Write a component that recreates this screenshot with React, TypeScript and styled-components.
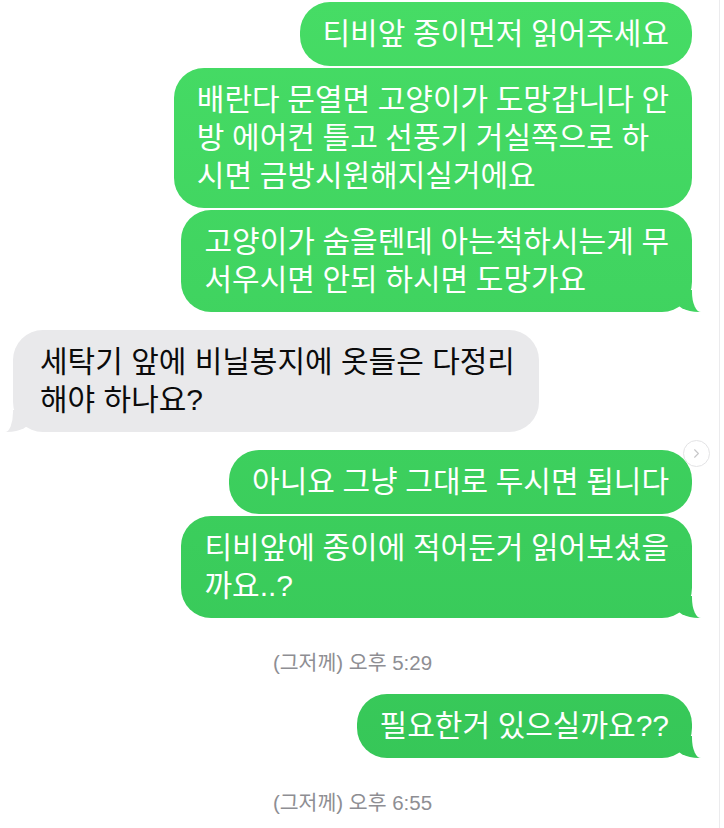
import React from 'react';
import styled, { createGlobalStyle, css } from 'styled-components';
import { ChevronRight } from 'lucide-react';

const GREEN = 'linear-gradient(180deg, #46dc65 0px, #35c557 828px) fixed';
const GRAY = '#e9e9eb';

const Global = createGlobalStyle`
  html, body { margin: 0; padding: 0; background: #fff; }
  body {
    font-family: "Liberation Sans", "Noto Sans CJK KR", sans-serif;
    -webkit-font-smoothing: antialiased;
  }
`;

const Page = styled.div`
  display: flex;
  width: 724px;
  height: 828px;
  overflow: hidden;
  background: #fff;
`;

const Thread = styled.main`
  box-sizing: border-box;
  width: 720px;
  height: 828px;
  border-right: 1px solid #ebebed;
  display: flex;
  flex-direction: column;
  padding-top: 2px;
`;

type Side = 'me' | 'them';

const Group = styled.section<{ $side: Side; $mt?: number }>`
  position: relative;
  display: flex;
  flex-direction: column;
  gap: 2px;
  align-items: ${(p) => (p.$side === 'me' ? 'flex-end' : 'flex-start')};
  padding: ${(p) => (p.$side === 'me' ? '0 27px 0 0' : '0 0 0 13px')};
  margin-top: ${(p) => p.$mt ?? 0}px;
`;

const tailRight = css`
  &::before {
    content: '';
    position: absolute;
    z-index: -1;
    bottom: 0;
    right: -9px;
    width: 26px;
    height: 22px;
    background: ${GREEN};
    border-bottom-left-radius: 24px 13px;
  }
  &::after {
    content: '';
    position: absolute;
    z-index: -1;
    bottom: 0;
    right: -20px;
    width: 20px;
    height: 24px;
    background: #fff;
    border-bottom-left-radius: 9px 20px;
  }
`;

const tailLeft = css`
  &::before {
    content: '';
    position: absolute;
    z-index: -1;
    bottom: 0;
    left: -8px;
    width: 26px;
    height: 22px;
    background: ${GRAY};
    border-bottom-right-radius: 24px 13px;
  }
  &::after {
    content: '';
    position: absolute;
    z-index: -1;
    bottom: 0;
    left: -20px;
    width: 20px;
    height: 24px;
    background: #fff;
    border-bottom-right-radius: 8px 20px;
  }
`;

const Bubble = styled.div<{ $side: Side; $tail?: boolean }>`
  position: relative;
  z-index: 0;
  border-radius: 30px;
  line-height: 38px;
  white-space: nowrap;
  ${(p) =>
    p.$side === 'me'
      ? css`
          background: ${GREEN};
          color: #fff;
          font-size: 30px;
          word-spacing: -0.7px;
          padding: 13px 23px;
        `
      : css`
          background: ${GRAY};
          color: #0b0b0b;
          font-size: 30px;
          padding: 13px 24px 13px 27px;
        `}
  ${(p) => p.$tail && (p.$side === 'me' ? tailRight : tailLeft)}
`;

const Stamp = styled.div<{ $mt: number }>`
  margin-top: ${(p) => p.$mt}px;
  padding-right: 14px;
  text-align: center;
  color: #8e8e93;
  font-size: 20.5px;
  line-height: 24px;
`;

const DetailButton = styled.span`
  position: absolute;
  top: -10px;
  right: 9px;
  z-index: 2;
  box-sizing: border-box;
  width: 27px;
  height: 27px;
  border-radius: 50%;
  border: 1px solid #e3e3e5;
  background: #fff;
  color: #c6c6c8;
  display: flex;
  align-items: center;
  justify-content: center;
`;

const Lines: React.FC<{ lines: string[] }> = ({ lines }) => (
  <>
    {lines.map((l, i) => (
      <React.Fragment key={i}>
        {i > 0 && <br />}
        {l}
      </React.Fragment>
    ))}
  </>
);

type Msg = { lines: string[] };

const Messages: React.FC<{ side: Side; msgs: Msg[]; mt?: number; detail?: boolean }> = ({
  side,
  msgs,
  mt,
  detail,
}) => (
  <Group $side={side} $mt={mt}>
    {detail && (
      <DetailButton>
        <ChevronRight size={15} strokeWidth={1.8} />
      </DetailButton>
    )}
    {msgs.map((m, i) => (
      <Bubble key={i} $side={side} $tail={i === msgs.length - 1}>
        <Lines lines={m.lines} />
      </Bubble>
    ))}
  </Group>
);

export default function App() {
  return (
    <>
      <Global />
      <Page>
        <Thread>
          <Messages
            side="me"
            msgs={[
              { lines: ['티비앞 종이먼저 읽어주세요'] },
              {
                lines: [
                  '배란다 문열면 고양이가 도망갑니다 안',
                  '방 에어컨 틀고 선풍기 거실쪽으로 하',
                  '시면 금방시원해지실거에요',
                ],
              },
              { lines: ['고양이가 숨을텐데 아는척하시는게 무', '서우시면 안되 하시면 도망가요'] },
            ]}
          />
          <Messages
            side="them"
            mt={18}
            msgs={[{ lines: ['세탁기 앞에 비닐봉지에 옷들은 다정리', '해야 하나요?'] }]}
          />
          <Messages
            side="me"
            mt={18}
            detail
            msgs={[
              { lines: ['아니요 그냥 그대로 두시면 됩니다'] },
              { lines: ['티비앞에 종이에 적어둔거 읽어보셨을', '까요..?'] },
            ]}
          />
          <Stamp $mt={33}>(그저께) 오후 5:29</Stamp>
          <Messages side="me" mt={19} msgs={[{ lines: ['필요한거 있으실까요??'] }]} />
          <Stamp $mt={33}>(그저께) 오후 6:55</Stamp>
        </Thread>
      </Page>
    </>
  );
}
